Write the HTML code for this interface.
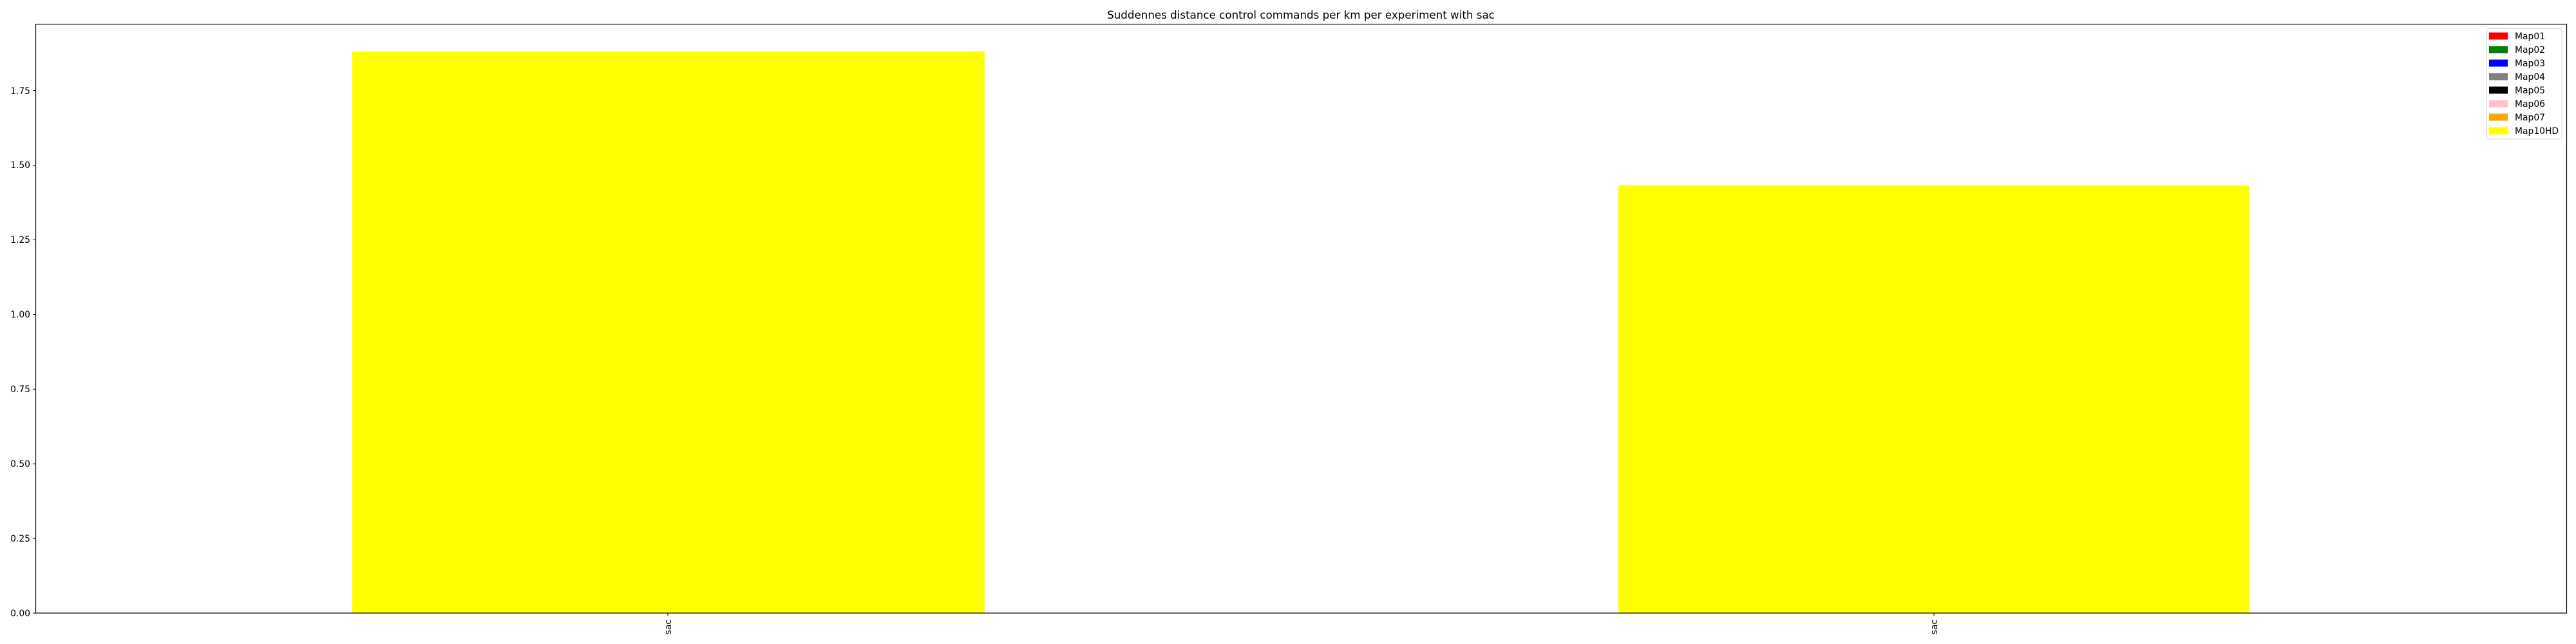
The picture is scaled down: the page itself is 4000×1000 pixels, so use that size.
<!DOCTYPE html>
<html><head><meta charset="utf-8"><style>html,body{margin:0;padding:0;background:#fff;width:4000px;height:1000px;overflow:hidden}</style></head>
<body>
<svg width="4000" height="1000" xmlns="http://www.w3.org/2000/svg" font-family="DejaVu Sans, Liberation Sans, sans-serif">
<rect width="4000" height="1000" fill="#fff"/>
<rect x="547" y="80" width="982" height="872" fill="#ffff00"/>
<rect x="2513" y="288" width="980" height="664" fill="#ffff00"/>
<rect x="55.5" y="37.5" width="3930" height="914.5" fill="none" stroke="#000" stroke-width="1.2"/>
<g stroke="#000" stroke-width="1">
<line x1="51" y1="952" x2="55" y2="952"/><line x1="51" y1="836.1" x2="55" y2="836.1"/><line x1="51" y1="720.2" x2="55" y2="720.2"/><line x1="51" y1="604.3" x2="55" y2="604.3"/><line x1="51" y1="488.4" x2="55" y2="488.4"/><line x1="51" y1="372.5" x2="55" y2="372.5"/><line x1="51" y1="256.6" x2="55" y2="256.6"/><line x1="51" y1="140.7" x2="55" y2="140.7"/>
<line x1="1037" y1="952" x2="1037" y2="956"/><line x1="3003" y1="952" x2="3003" y2="956"/>
</g>
<g font-size="13.9" text-anchor="end" fill="#000">
<text x="47" y="957">0.00</text><text x="47" y="841">0.25</text><text x="47" y="725">0.50</text><text x="47" y="609">0.75</text><text x="47" y="493">1.00</text><text x="47" y="377">1.25</text><text x="47" y="261">1.50</text><text x="47" y="146">1.75</text>
</g>
<g font-size="13.9" fill="#000" text-anchor="end">
<text transform="translate(1042,962) rotate(-90)">sac</text>
<text transform="translate(3008,962) rotate(-90)">sac</text>
</g>
<text x="2020" y="29" font-size="16.7" text-anchor="middle" fill="#000">Suddennes distance control commands per km per experiment with sac</text>
<rect x="3861" y="44.5" width="117" height="171.5" rx="3" fill="#fff" fill-opacity="0.8" stroke="#d6d6d6" stroke-width="1"/>
<g>
<rect x="3865" y="50.5" width="29" height="11" fill="#ff0000"/>
<rect x="3865" y="71.5" width="29" height="11" fill="#008000"/>
<rect x="3865" y="92.5" width="29" height="11" fill="#0000ff"/>
<rect x="3865" y="113.5" width="29" height="11" fill="#808080"/>
<rect x="3865" y="134.5" width="29" height="11" fill="#000000"/>
<rect x="3865" y="155.5" width="29" height="11" fill="#ffc0cb"/>
<rect x="3865" y="176.5" width="29" height="11" fill="#ffa500"/>
<rect x="3865" y="197.5" width="29" height="11" fill="#ffff00"/>
</g>
<g font-size="13.9" fill="#000">
<text x="3905" y="61">Map01</text><text x="3905" y="82">Map02</text><text x="3905" y="103">Map03</text><text x="3905" y="124">Map04</text><text x="3905" y="145">Map05</text><text x="3905" y="166">Map06</text><text x="3905" y="187">Map07</text><text x="3905" y="208">Map10HD</text>
</g>
</svg>
</body></html>
